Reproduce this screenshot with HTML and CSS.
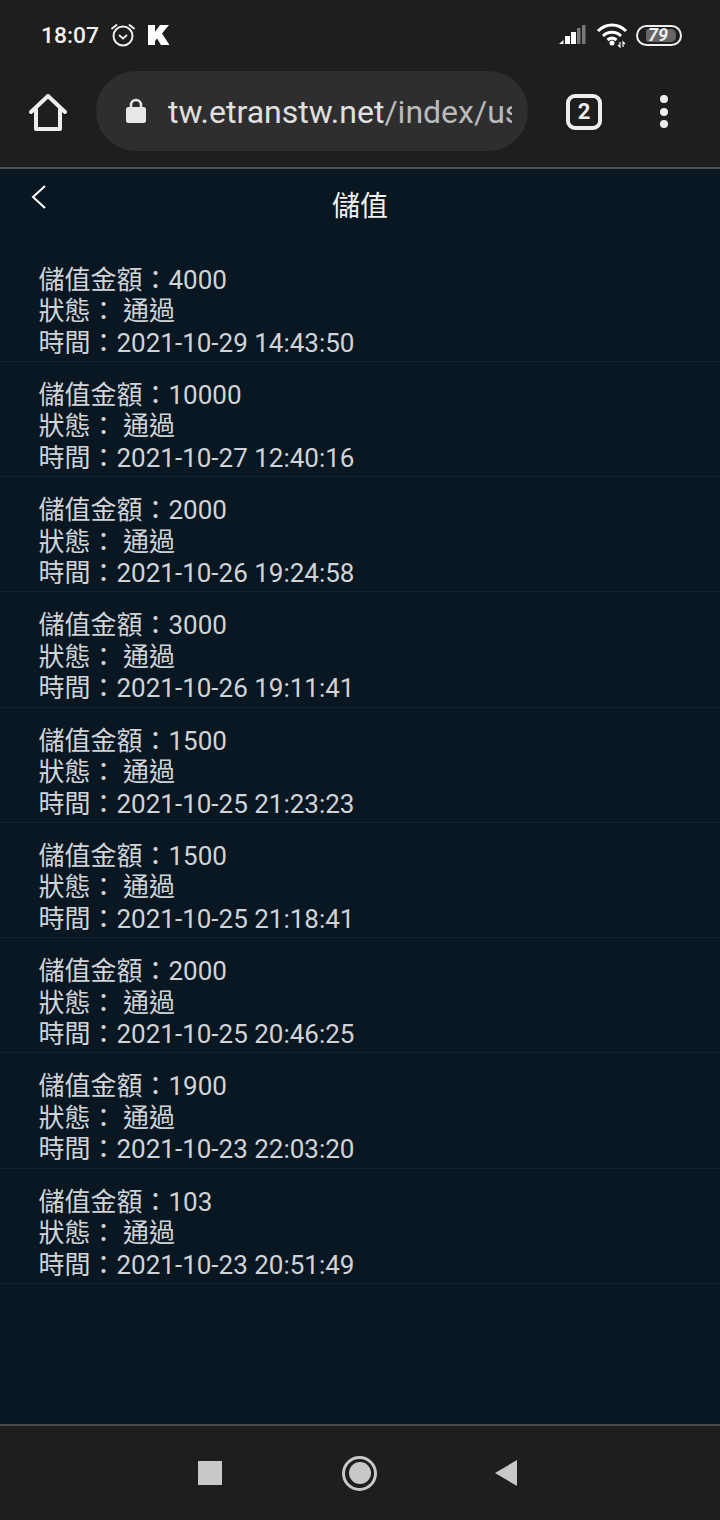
FILE: index.html
```html
<!DOCTYPE html>
<html lang="zh-Hant">
<head>
    <meta charset="UTF-8">
    <meta name="viewport" content="width=device-width, initial-scale=1.0">
    <title>儲值</title>
    <link rel="stylesheet" href="styles.css">
</head>
<body>
    <div class="phone">
        <div class="statusbar">
            <div class="status-left">
                <span class="clock">18:07</span>
                <svg class="alarm" width="26" height="26" viewBox="0 0 26 26" fill="none" stroke="#eee" stroke-width="2">
                    <circle cx="13" cy="14" r="9.5"/>
                    <path d="M9 13l4 3.5 4-3.5" stroke-width="1.8"/>
                    <path d="M2 6.5L6.5 3M24 6.5L19.5 3" stroke-linecap="round"/>
                </svg>
                <svg class="klogo" width="24" height="22" viewBox="0 0 24 22" fill="#fff">
                    <path d="M1 1h7v7l5-7h9l-7 8.500 7.500 11.500h-8.500l-4-6.500-2 2.500v4h-7z"/>
                </svg>
            </div>
            <div class="status-right">
                <svg width="30" height="22" viewBox="0 0 30 22" fill="#fff">
                    <path d="M1 20l4.500-4v4z"/>
                    <rect x="7" y="12" width="5" height="8"/>
                    <rect x="13" y="8" width="5" height="12"/>
                    <rect x="19" y="4" width="3.500" height="16" fill="#777"/>
                    <rect x="24" y="1" width="3.500" height="19" fill="#777"/>
                </svg>
                <svg width="32" height="26" viewBox="0 0 32 26" fill="none" stroke="#fff" stroke-width="3">
                    <path d="M2 9C10 1 22 1 30 9"/>
                    <path d="M7 14c5-5 13-5 18 0"/>
                    <path d="M11.500 18c3-2.500 6-2.500 9 0"/>
                    <circle cx="16" cy="21" r="2.500" fill="#fff" stroke="none"/>
                    <path d="M24 20v5l-2-2M27 25v-5l2 2" stroke-width="1.200"/>
                </svg>
                <div class="battery">
                    <div class="battery-fill"></div>
                    <span class="battery-num">79</span>
                </div>
            </div>
        </div>

        <div class="toolbar">
            <svg class="home" width="38" height="38" viewBox="0 0 38 38" fill="none" stroke="#eee" stroke-width="4" stroke-linejoin="round" stroke-linecap="round">
                <path d="M2 18L19 2l17 16"/>
                <path d="M7 15v20h24V15"/>
            </svg>
            <div class="urlbar">
                <svg class="lock" width="22" height="28" viewBox="0 0 22 28">
                    <path d="M6 12V8a5 5 0 0 1 10 0v4" fill="none" stroke="#e8e8e8" stroke-width="2.500"/>
                    <rect x="1" y="10" width="20" height="16" rx="2.500" fill="#e8e8e8"/>
                </svg>
                <div class="url"><span class="host">tw.etranstw.net</span>/index/us</div>
            </div>
            <div class="tabs">2</div>
            <div class="menu">
                <span></span>
                <span></span>
                <span></span>
            </div>
        </div>

        <div class="page">
            <div class="page-head">
                <svg class="back" width="18" height="26" viewBox="0 0 18 26" fill="none" stroke="#fff" stroke-width="2">
                    <path d="M15 2L3 13l12 11"/>
                </svg>
                <h1 class="title">儲值</h1>
            </div>
            <ul class="records">
                <li>儲值金額：4000<br>狀態： 通過<br>時間：2021-10-29 14:43:50</li>
                <li>儲值金額：10000<br>狀態： 通過<br>時間：2021-10-27 12:40:16</li>
                <li>儲值金額：2000<br>狀態： 通過<br>時間：2021-10-26 19:24:58</li>
                <li>儲值金額：3000<br>狀態： 通過<br>時間：2021-10-26 19:11:41</li>
                <li>儲值金額：1500<br>狀態： 通過<br>時間：2021-10-25 21:23:23</li>
                <li>儲值金額：1500<br>狀態： 通過<br>時間：2021-10-25 21:18:41</li>
                <li>儲值金額：2000<br>狀態： 通過<br>時間：2021-10-25 20:46:25</li>
                <li>儲值金額：1900<br>狀態： 通過<br>時間：2021-10-23 22:03:20</li>
                <li>儲值金額：103<br>狀態： 通過<br>時間：2021-10-23 20:51:49</li>
            </ul>
        </div>

        <div class="navbar">
            <div class="nav-square"></div>
            <div class="nav-circle"><div class="nav-dot"></div></div>
            <svg width="24" height="28" viewBox="0 0 24 28"><path d="M23 1v26L1 14z" fill="#c8c8c8"/></svg>
        </div>
    </div>
</body>
</html>
```

FILE: styles.css
```css
* {
    box-sizing: border-box;
}

body {
    margin: 0;
    font-family: Roboto, "Noto Sans CJK TC", sans-serif;
    background-color: #1e1e1e;
}

.phone {
    width: 720px;
    height: 1520px;
    display: flex;
    flex-direction: column;
    overflow: hidden;
}

.statusbar {
    height: 70px;
    flex: none;
    display: flex;
    justify-content: space-between;
    align-items: center;
    padding: 0 38px 0 41px;
    background-color: #1e1e1e;
}

.status-left {
    display: flex;
    align-items: center;
    gap: 11px;
}

.clock {
    font-size: 22.800px;
    font-weight: 500;
    color: #f0f0f0;
}

.status-right {
    display: flex;
    align-items: center;
    gap: 8px;
}

.battery {
    position: relative;
    width: 46px;
    height: 21px;
    border: 2px solid #eee;
    border-radius: 11px;
    padding: 2px 2px 2px 8px;
}

.battery-fill {
    width: 30px;
    height: 13px;
    background-color: #666;
    border-radius: 2px 5px 5px 2px;
}

.battery-num {
    position: absolute;
    left: 10px;
    top: -3px;
    font-size: 18px;
    font-weight: 700;
    font-style: italic;
    color: #eee;
}

.toolbar {
    height: 97px;
    flex: none;
    display: flex;
    align-items: flex-start;
    padding-top: 1px;
    background-color: #1e1e1e;
}

.home {
    margin: 23px 0 0 29px;
}

.urlbar {
    width: 432px;
    height: 80px;
    margin-left: 29px;
    display: flex;
    align-items: center;
    padding: 0 16px 0 29px;
    border-radius: 40px;
    background-color: #2e2e2e;
}

.lock {
    flex: none;
    margin-top: -1px;
}

.url {
    margin-left: 21px;
    padding-top: 1px;
    font-size: 32px;
    line-height: 40px;
    color: #bababa;
    white-space: nowrap;
    overflow: hidden;
}

.host {
    color: #e0e0e0;
}

.tabs {
    width: 36px;
    height: 36px;
    margin: 23px 0 0 38px;
    border: 4px solid #eee;
    border-radius: 9px;
    color: #eee;
    font-size: 22px;
    font-weight: 700;
    line-height: 28px;
    text-align: center;
}

.menu {
    display: flex;
    flex-direction: column;
    gap: 4.500px;
    margin: 24px 0 0 58px;
}

.menu span {
    width: 8px;
    height: 8px;
    border-radius: 50%;
    background-color: #eee;
}

.page {
    flex: 1;
    border-top: 2px solid #4a5058;
    background-color: #081722;
}

.page-head {
    position: relative;
    height: 77.500px;
}

.back {
    position: absolute;
    left: 30px;
    top: 15px;
}

.title {
    margin: 0;
    padding-top: 18px;
    font-size: 28px;
    font-weight: 400;
    line-height: 40px;
    text-align: center;
    color: #f2f2f2;
}

.records {
    list-style: none;
    margin: 0;
    padding: 0;
}

.records li {
    height: 115.250px;
    padding: 18px 38.500px 0;
    border-bottom: 1px solid #12212e;
    font-size: 26px;
    line-height: 31.500px;
    color: #d0d4d8;
    white-space: nowrap;
}

.navbar {
    height: 96px;
    flex: none;
    display: flex;
    align-items: center;
    gap: 117px;
    padding-left: 198px;
    border-top: 2px solid #4a4a4a;
    background-color: #1e1e1e;
}

.nav-square {
    width: 24px;
    height: 24px;
    background-color: #c8c8c8;
}

.nav-circle {
    width: 35px;
    height: 35px;
    margin-left: 3px;
    padding: 3.500px;
    border: 3px solid #c8c8c8;
    border-radius: 50%;
}

.nav-dot {
    width: 22px;
    height: 22px;
    border-radius: 50%;
    background-color: #c8c8c8;
}
```
